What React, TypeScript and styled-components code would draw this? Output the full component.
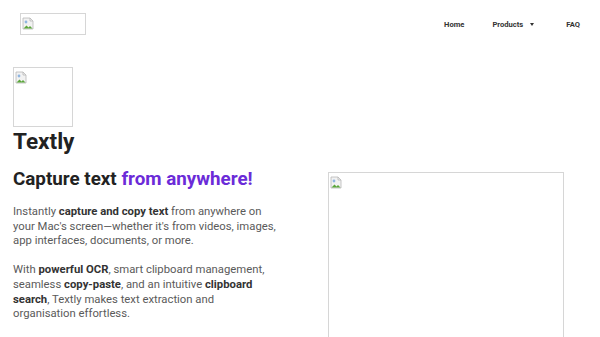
import styled, { createGlobalStyle } from 'styled-components';

const GlobalStyle = createGlobalStyle`
  html, body {
    margin: 0;
    padding: 0;
    background: #fff;
    font-family: Roboto, 'Liberation Sans', sans-serif;
  }
`;

const Header = styled.header`
  display: flex;
  align-items: center;
  justify-content: space-between;
  height: 48px;
  padding: 0 20px;
`;

const Placeholder = styled.div<{ $w: number; $h: number }>`
  width: ${(p) => p.$w}px;
  height: ${(p) => p.$h}px;
  box-sizing: border-box;
  border: 1px solid #d6d6d6;
  flex-shrink: 0;
  padding: 1px;
`;

const Nav = styled.nav`
  display: flex;
  align-items: center;
  gap: 28px;
`;

const NavItem = styled.a`
  display: flex;
  align-items: center;
  gap: 7px;
  font-size: 7.6px;
  font-weight: 700;
  color: #333;
  text-decoration: none;
`;

const Caret = styled.span`
  width: 0;
  height: 0;
  margin-right: 4px;
  border-left: 2.5px solid transparent;
  border-right: 2.5px solid transparent;
  border-top: 3.5px solid #333;
`;

const Main = styled.main`
  padding: 19px 13px 0;
`;

const Title = styled.h1`
  margin: 0;
  font-size: 22.5px;
  line-height: 29px;
  font-weight: 700;
  color: #222;
`;

const Row = styled.div`
  display: flex;
  align-items: flex-start;
  margin-top: 11px;
`;

const TextCol = styled.div`
  width: 265px;
  flex-shrink: 0;
`;

const Heading = styled.h2`
  margin: 0 0 14px;
  font-size: 18.8px;
  line-height: 24px;
  font-weight: 700;
  color: #222;
`;

const Accent = styled.span`
  color: #6b2bd8;
`;

const Para = styled.p`
  margin: 0 0 14.6px;
  font-size: 11.3px;
  line-height: 14.6px;
  color: #5a5a5a;

  b {
    color: #333;
    font-weight: 700;
  }
`;

const ShotWrap = styled.div`
  margin: 5px 0 0 50px;
`;

function BrokenIcon() {
  return (
    <svg width="12" height="13" viewBox="0 0 12 13">
      <path d="M1 1h7l3 3v8H1z" fill="#f2f2f2" stroke="#b8b8b8" strokeWidth="0.8" />
      <path d="M8 1v3h3" fill="none" stroke="#b8b8b8" strokeWidth="0.8" />
      <path d="M1.5 11.5l3-3 2 2 1.5-1.5 2.5 2.5z" fill="#5aa63a" />
      <circle cx="4" cy="5" r="1.4" fill="#8fb5e0" />
    </svg>
  );
}

export default function App() {
  return (
    <>
      <GlobalStyle />
      <Header>
        <Placeholder $w={66} $h={22}>
          <BrokenIcon />
        </Placeholder>
        <Nav>
          <NavItem href="#">Home</NavItem>
          <NavItem href="#">
            Products <Caret />
          </NavItem>
          <NavItem href="#">FAQ</NavItem>
        </Nav>
      </Header>
      <Main>
        <Placeholder $w={60} $h={60}>
          <BrokenIcon />
        </Placeholder>
        <Title>Textly</Title>
        <Row>
          <TextCol>
            <Heading>
              Capture text <Accent>from anywhere!</Accent>
            </Heading>
            <Para>
              Instantly <b>capture and copy text</b> from anywhere on your Mac's screen—whether
              it's from videos, images, app interfaces, documents, or more.
            </Para>
            <Para>
              With <b>powerful OCR</b>, smart clipboard management, seamless <b>copy-paste</b>,
              and an intuitive <b>clipboard search</b>, Textly makes text extraction and
              organisation effortless.
            </Para>
          </TextCol>
          <ShotWrap>
            <Placeholder $w={236} $h={220}>
              <BrokenIcon />
            </Placeholder>
          </ShotWrap>
        </Row>
      </Main>
    </>
  );
}
